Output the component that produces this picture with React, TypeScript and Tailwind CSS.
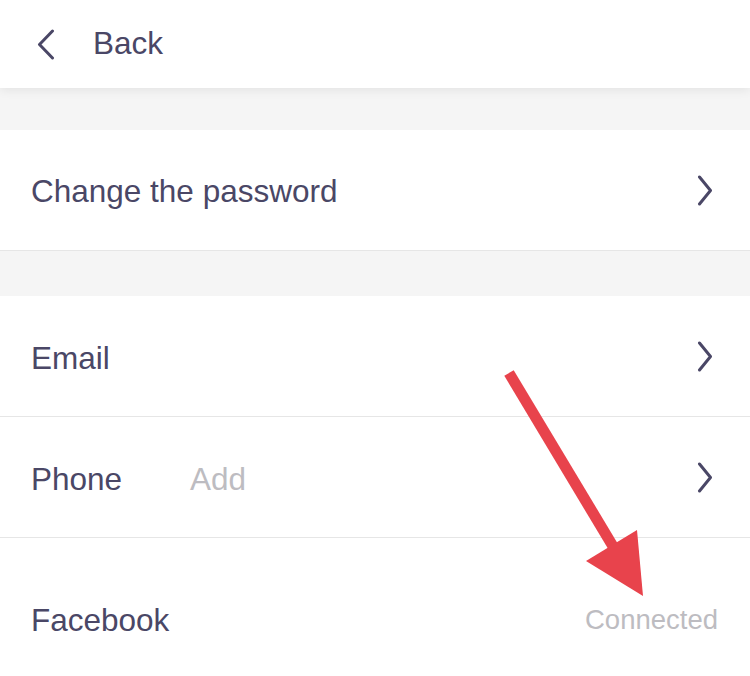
import { ReactNode } from "react";

function Chevron() {
  return (
    <svg width="16" height="31" viewBox="0 0 16 31" fill="none" className="shrink-0">
      <path d="M2.5 2 L13.5 15.5 L2.5 29" stroke="#4a4766" strokeWidth="3" strokeLinecap="round" strokeLinejoin="round" />
    </svg>
  );
}

function Row({
  label,
  value,
  right,
  tall,
  last,
}: {
  label: string;
  value?: ReactNode;
  right?: ReactNode;
  tall?: boolean;
  last?: boolean;
}) {
  return (
    <div
      className={`flex items-center bg-white pl-[31px] ${tall ? "h-[160px]" : "h-[121px]"} ${
        last ? "" : "border-b border-[#e6e6e6]"
      }`}
    >
      <div className="w-[159px] shrink-0 whitespace-nowrap pt-[5px] text-[31.5px] text-[#4a4766]">{label}</div>
      <div className="flex-1 pt-[5px] text-[31.5px] text-[#bdbcc1]">{value}</div>
      {right}
    </div>
  );
}

export default function App() {
  return (
    <div
      className="relative h-[676px] w-[750px] overflow-hidden bg-[#f5f5f5]"
      style={{ fontFamily: '"Liberation Sans", Arial, sans-serif' }}
    >
      {/* header */}
      <div className="relative z-10 flex h-[88px] items-center bg-white shadow-[0_2px_10px_rgba(0,0,0,0.08)]">
        <div className="ml-[37px] flex items-center">
          <svg width="18" height="31" viewBox="0 0 18 31" fill="none">
            <path d="M15.5 2 L2.5 15.5 L15.5 29" stroke="#4a4766" strokeWidth="3" strokeLinecap="round" strokeLinejoin="round" />
          </svg>
        </div>
        <span className="ml-[38px] text-[31.5px] text-[#4a4766]">Back</span>
      </div>

      <div className="h-[42px]" />

      <div className="flex items-center justify-between border-b border-[#e6e6e6] bg-white h-[121px] pl-[31px] pr-[37px]">
        <span className="pt-[3px] text-[31.5px] text-[#4a4766]">Change the password</span>
        <Chevron />
      </div>

      <div className="h-[45px]" />

      <div>
        <Row label="Email" right={<div className="pr-[37px]"><Chevron /></div>} />
        <Row label="Phone" value="Add" right={<div className="pr-[37px]"><Chevron /></div>} />
        <Row
          label="Facebook"
          tall
          last
          right={<span className="pr-[32px] pt-[3px] text-[27.5px] text-[#bdbcc1]">Connected</span>}
        />
      </div>

      {/* annotation arrow */}
      <svg className="pointer-events-none absolute left-0 top-0" width="750" height="676" viewBox="0 0 750 676">
        <line x1="509" y1="373" x2="614" y2="548" stroke="#e8434c" strokeWidth="11" />
        <polygon points="586,561 637,530 643,596" fill="#e8434c" />
      </svg>
    </div>
  );
}
